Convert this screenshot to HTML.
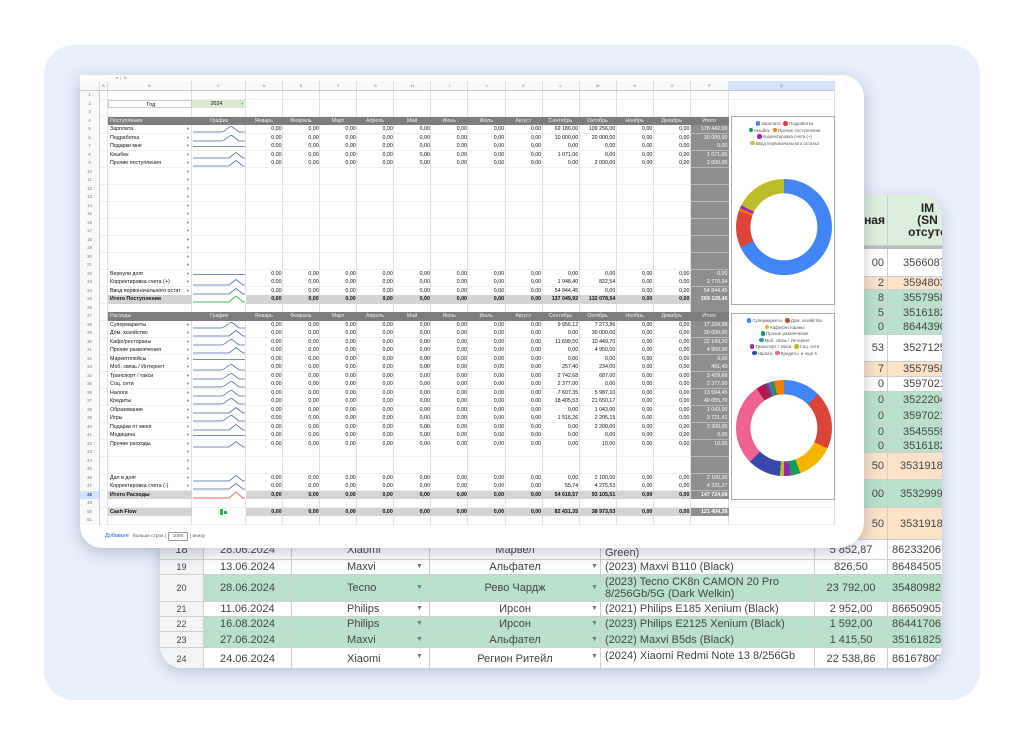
<!DOCTYPE html>
<html><head><meta charset="utf-8"><style>
*{margin:0;padding:0;box-sizing:border-box}
body{width:1024px;height:746px;background:#fff;position:relative;overflow:hidden;font-family:"Liberation Sans",sans-serif}
.bg{position:absolute;left:44px;top:45px;width:936px;height:655px;background:#e8eefb;border-radius:30px}
.back{position:absolute;left:160px;top:195px;width:782px;height:473px;background:#fff;border-radius:22px;overflow:hidden;box-shadow:0 4px 14px rgba(60,70,110,.25);font-size:11px;color:#444}
.back .c{position:absolute;display:flex;align-items:center;justify-content:center;border-right:1px solid #cfcfcf;border-bottom:1px solid #cfcfcf;white-space:nowrap;overflow:hidden;line-height:12px}
.back .l{justify-content:flex-start;padding-left:4px;white-space:normal}
.gr{background:#b8e2cc}.or{background:#fce3c8}.hd2{background:#dceedc;font-weight:bold;font-size:12px;line-height:14px;text-align:center;color:#222}
.arr{position:absolute;font-size:7px;color:#777}
.front{position:absolute;left:80px;top:75px;width:784px;height:473px;background:#fff;border-radius:0 22px 26px 22px;overflow:hidden;box-shadow:0 4px 16px rgba(60,70,110,.3)}
.fb{position:absolute;left:0;top:0;width:784px;height:6px;font-size:4px;color:#888;padding-left:36px;line-height:6px}
.sheet{position:absolute;left:0;top:6px;width:755px}
.g{display:grid;grid-template-columns:20px 8px 84px 54px repeat(12,37.08px) 38px 106px}
.hd{height:10px;background:#f8f9fa;border-bottom:1px solid #ccc;font-size:4px;color:#777;line-height:9px;text-align:center}
.hd>i{border-right:.5px solid #ddd;font-style:normal}
.vl{position:absolute;left:0;top:10px;width:755px;height:434px}
.vl>i{border-right:.5px solid #e0e0e0;height:100%}
.pg{position:absolute;left:611px;top:35.5px;width:38px;height:382.5px;background:#8e8e8e}
.rows{position:relative}
.r{height:8.5px;font-size:5.3px;line-height:8.5px;color:#111;background:linear-gradient(#e2e2e2,#e2e2e2) bottom/100% .5px no-repeat}
.r>i{font-style:normal;white-space:nowrap;overflow:hidden;height:8.5px;position:relative}
.r>i:first-child{background:#f8f9fa;color:#777;text-align:center;font-size:4.2px;border-right:.5px solid #ccc}
.r>i:nth-child(3){padding-left:2px}
.r>i:nth-child(n+5){text-align:right;padding-right:1.5px}
.r>i:nth-child(17){color:#fff}
.dd>i:nth-child(3)::after{content:"▾";position:absolute;right:3px;top:0;color:#777;font-size:4.5px}
.h>i:nth-child(n+3):nth-child(-n+17){background:#7d7d7d;color:#f2f2f2}
.h>i:nth-child(4),.h>i:nth-child(n+5){text-align:center!important}
.s>i:nth-child(n+3):nth-child(-n+17){background:#d4d4d4;font-weight:bold}
.s>i:nth-child(17){background:#8e8e8e!important;color:#fff}
.r svg{position:absolute;left:1px;top:0}
.chart{position:absolute;left:651px;width:104px;background:#fff;border:.7px solid #aaa}
.leg{font-size:4.4px;color:#555;text-align:center;line-height:6.5px;padding-top:4px}
.d{display:inline-block;width:4.5px;height:4.5px;border-radius:50%;vertical-align:-0.5px;margin:0 1px 0 3px}
.donut{position:absolute;border-radius:50%}
.donut::after{content:"";position:absolute;left:50%;top:50%;width:70%;height:70%;transform:translate(-50%,-50%);background:#fff;border-radius:50%}
.bot{position:absolute;left:25px;top:457px;font-size:4.8px;color:#555}
</style></head><body>
<div class="bg"></div>
<svg width="0" height="0" style="position:absolute"><defs>
<symbol id="p" viewBox="0 0 52 8"><path d="M0 7H36L43 1.5L50 7H52" fill="none" stroke="#4a6aa3" stroke-width=".8"/></symbol>
<symbol id="q" viewBox="0 0 52 8"><path d="M0 7H28C33 7 34 1.5 39 1.5L46 7H52" fill="none" stroke="#4a6aa3" stroke-width=".8"/></symbol>
<symbol id="f" viewBox="0 0 52 8"><path d="M0 4.5H52" fill="none" stroke="#4a6aa3" stroke-width=".8"/></symbol>
</defs></svg>

<div class="back">
<div class="c hd2" style="left:690px;top:0;width:38px;height:51px;justify-content:flex-end;padding-right:2px">ная</div>
<div class="c hd2" style="left:728px;top:0;width:80px;height:51px">IM<br>(SN<br>отсутс</div>
<div class="c" style="left:690px;top:51px;width:38px;height:3px;background:#bbb;border:0"></div>
<div class="c" style="left:728px;top:51px;width:80px;height:3px;background:#bbb;border:0"></div>
<div class="c" style="left:690px;top:54px;width:38px;height:28px;justify-content:flex-end;padding-right:3px">00</div><div class="c" style="left:728px;top:54px;width:80px;height:28px">35660875</div>
<div class="c or" style="left:690px;top:82px;width:38px;height:13px;justify-content:flex-end;padding-right:3px">2</div><div class="c or" style="left:728px;top:82px;width:80px;height:13px">35948030</div>
<div class="c gr" style="left:690px;top:95px;width:38px;height:16px;justify-content:flex-end;padding-right:3px">8</div><div class="c gr" style="left:728px;top:95px;width:80px;height:16px">35579588</div>
<div class="c gr" style="left:690px;top:111px;width:38px;height:14px;justify-content:flex-end;padding-right:3px">5</div><div class="c gr" style="left:728px;top:111px;width:80px;height:14px">35161825</div>
<div class="c gr" style="left:690px;top:125px;width:38px;height:15px;justify-content:flex-end;padding-right:3px">0</div><div class="c gr" style="left:728px;top:125px;width:80px;height:15px">86443906</div>
<div class="c" style="left:690px;top:140px;width:38px;height:27px;justify-content:flex-end;padding-right:3px">53</div><div class="c" style="left:728px;top:140px;width:80px;height:27px">35271257</div>
<div class="c or" style="left:690px;top:167px;width:38px;height:15px;justify-content:flex-end;padding-right:3px">7</div><div class="c or" style="left:728px;top:167px;width:80px;height:15px">35579588</div>
<div class="c" style="left:690px;top:182px;width:38px;height:15px;justify-content:flex-end;padding-right:3px">0</div><div class="c" style="left:728px;top:182px;width:80px;height:15px">35970210</div>
<div class="c gr" style="left:690px;top:197px;width:38px;height:16px;justify-content:flex-end;padding-right:3px">0</div><div class="c gr" style="left:728px;top:197px;width:80px;height:16px">35222048</div>
<div class="c gr" style="left:690px;top:213px;width:38px;height:17px;justify-content:flex-end;padding-right:3px">0</div><div class="c gr" style="left:728px;top:213px;width:80px;height:17px">35970210</div>
<div class="c gr" style="left:690px;top:230px;width:38px;height:14px;justify-content:flex-end;padding-right:3px">0</div><div class="c gr" style="left:728px;top:230px;width:80px;height:14px">35455590</div>
<div class="c gr" style="left:690px;top:244px;width:38px;height:14px;justify-content:flex-end;padding-right:3px">0</div><div class="c gr" style="left:728px;top:244px;width:80px;height:14px">35161825</div>
<div class="c or" style="left:690px;top:258px;width:38px;height:27px;justify-content:flex-end;padding-right:3px">50</div><div class="c or" style="left:728px;top:258px;width:80px;height:27px">353191812</div>
<div class="c gr" style="left:690px;top:285px;width:38px;height:28px;justify-content:flex-end;padding-right:3px">00</div><div class="c gr" style="left:728px;top:285px;width:80px;height:28px">353299948</div>
<div class="c or" style="left:690px;top:313px;width:38px;height:32px;justify-content:flex-end;padding-right:3px">50</div><div class="c or" style="left:728px;top:313px;width:80px;height:32px">353191812</div>
<div class="c" style="left:0;top:345px;width:44px;height:120px;background:#f3f4f6;border-right:2px solid #bbb"></div>
<div class="c" style="left:0;top:345px;width:44px;height:20px;background:#f3f4f6">18</div>
<div class="c" style="left:44px;top:345px;width:88px;height:20px">28.06.2024</div>
<div class="c" style="left:132px;top:345px;width:138px;height:20px;justify-content:flex-start;padding-left:55px">Xiaomi</div>
<div class="c" style="left:270px;top:345px;width:171px;height:20px">Марвел</div>
<div class="c l" style="left:441px;top:345px;width:214px;height:20px;align-items:flex-end">Green)</div>
<div class="c" style="left:655px;top:345px;width:73px;height:20px">5 852,87</div>
<div class="c" style="left:728px;top:345px;width:80px;height:20px;justify-content:flex-start;padding-left:4px">86233206</div>

<div class="c" style="left:0;top:365px;width:44px;height:15px;background:#f3f4f6;font-size:9px">19</div>
<div class="c" style="left:44px;top:365px;width:88px;height:15px">13.06.2024</div>
<div class="c" style="left:132px;top:365px;width:138px;height:15px;justify-content:flex-start;padding-left:55px">Maxvi</div>
<div class="c" style="left:270px;top:365px;width:171px;height:15px">Альфател</div>
<div class="c l" style="left:441px;top:365px;width:214px;height:15px">(2023) Maxvi B110 (Black)</div>
<div class="c" style="left:655px;top:365px;width:73px;height:15px">826,50</div>
<div class="c" style="left:728px;top:365px;width:80px;height:15px;justify-content:flex-start;padding-left:4px">86484505</div>

<div class="c" style="left:0;top:380px;width:44px;height:27px;background:#f3f4f6;font-size:9px">20</div>
<div class="c gr" style="left:44px;top:380px;width:88px;height:27px">28.06.2024</div>
<div class="c gr" style="left:132px;top:380px;width:138px;height:27px;justify-content:flex-start;padding-left:55px">Tecno</div>
<div class="c gr" style="left:270px;top:380px;width:171px;height:27px">Рево Чардж</div>
<div class="c gr l" style="left:441px;top:380px;width:214px;height:27px">(2023) Tecno CK8n CAMON 20 Pro 8/256Gb/5G (Dark Welkin)</div>
<div class="c gr" style="left:655px;top:380px;width:73px;height:27px">23 792,00</div>
<div class="c gr" style="left:728px;top:380px;width:80px;height:27px;justify-content:flex-start;padding-left:4px">35480982</div>

<div class="c" style="left:0;top:407px;width:44px;height:15px;background:#f3f4f6;font-size:9px">21</div>
<div class="c" style="left:44px;top:407px;width:88px;height:15px">11.06.2024</div>
<div class="c" style="left:132px;top:407px;width:138px;height:15px;justify-content:flex-start;padding-left:55px">Philips</div>
<div class="c" style="left:270px;top:407px;width:171px;height:15px">Ирсон</div>
<div class="c l" style="left:441px;top:407px;width:214px;height:15px">(2021) Philips E185 Xenium (Black)</div>
<div class="c" style="left:655px;top:407px;width:73px;height:15px">2 952,00</div>
<div class="c" style="left:728px;top:407px;width:80px;height:15px;justify-content:flex-start;padding-left:4px">86650905</div>

<div class="c" style="left:0;top:422px;width:44px;height:15px;background:#f3f4f6;font-size:9px">22</div>
<div class="c gr" style="left:44px;top:422px;width:88px;height:15px">16.08.2024</div>
<div class="c gr" style="left:132px;top:422px;width:138px;height:15px;justify-content:flex-start;padding-left:55px">Philips</div>
<div class="c gr" style="left:270px;top:422px;width:171px;height:15px">Ирсон</div>
<div class="c gr l" style="left:441px;top:422px;width:214px;height:15px">(2023) Philips E2125 Xenium (Black)</div>
<div class="c gr" style="left:655px;top:422px;width:73px;height:15px">1 592,00</div>
<div class="c gr" style="left:728px;top:422px;width:80px;height:15px;justify-content:flex-start;padding-left:4px">86441706</div>

<div class="c" style="left:0;top:437px;width:44px;height:16px;background:#f3f4f6;font-size:9px">23</div>
<div class="c gr" style="left:44px;top:437px;width:88px;height:16px">27.06.2024</div>
<div class="c gr" style="left:132px;top:437px;width:138px;height:16px;justify-content:flex-start;padding-left:55px">Maxvi</div>
<div class="c gr" style="left:270px;top:437px;width:171px;height:16px">Альфател</div>
<div class="c gr l" style="left:441px;top:437px;width:214px;height:16px">(2022) Maxvi B5ds (Black)</div>
<div class="c gr" style="left:655px;top:437px;width:73px;height:16px">1 415,50</div>
<div class="c gr" style="left:728px;top:437px;width:80px;height:16px;justify-content:flex-start;padding-left:4px">35161825</div>

<div class="c" style="left:0;top:453px;width:44px;height:22px;background:#f3f4f6;font-size:9px">24</div>
<div class="c" style="left:44px;top:453px;width:88px;height:22px">24.06.2024</div>
<div class="c" style="left:132px;top:453px;width:138px;height:22px;justify-content:flex-start;padding-left:55px">Xiaomi</div>
<div class="c" style="left:270px;top:453px;width:171px;height:22px">Регион Ритейл</div>
<div class="c l" style="left:441px;top:453px;width:214px;height:22px;align-items:flex-start;padding-top:2px">(2024) Xiaomi Redmi Note 13 8/256Gb</div>
<div class="c" style="left:655px;top:453px;width:73px;height:22px">22 538,86</div>
<div class="c" style="left:728px;top:453px;width:80px;height:22px;justify-content:flex-start;padding-left:4px">86167800</div>
<span class="arr" style="left:256px;top:368px">▼</span><span class="arr" style="left:256px;top:389px">▼</span><span class="arr" style="left:256px;top:410px">▼</span><span class="arr" style="left:256px;top:425px">▼</span><span class="arr" style="left:256px;top:441px">▼</span><span class="arr" style="left:256px;top:458px">▼</span>
<span class="arr" style="left:431px;top:368px">▼</span><span class="arr" style="left:431px;top:389px">▼</span><span class="arr" style="left:431px;top:410px">▼</span><span class="arr" style="left:431px;top:425px">▼</span><span class="arr" style="left:431px;top:441px">▼</span><span class="arr" style="left:431px;top:458px">▼</span>
</div>

<div class="front">
<div class="fb">▾ &nbsp;| &nbsp;fx</div>
<div class="sheet">
<div class="g hd"><i></i><i>A</i><i>B</i><i>C</i><i>D</i><i>E</i><i>F</i><i>G</i><i>H</i><i>I</i><i>J</i><i>K</i><i>L</i><i>M</i><i>N</i><i>O</i><i>P</i><i style="background:#d3e3fd">Q</i></div>
<div class="g vl"><i></i><i></i><i></i><i></i><i></i><i></i><i></i><i></i><i></i><i></i><i></i><i></i><i></i><i></i><i></i><i></i><i></i><i></i></div>
<div class="pg"></div>
<div class="rows">
<div class="g r"><i>1</i></div>
<div class="g r"><i>2</i><i></i><i style="background:#fff;border:.5px solid #ccc;text-align:center">Год</i><i style="background:#d9ead3;text-align:center">2024 <span style="color:#6a6;font-size:4px;float:right;padding-right:3px">▾</span></i></div>
<div class="g r"><i>3</i></div>
<div class="g r h"><i>4</i><i></i><i>Поступления</i><i style="text-align:center">График</i><i>Январь</i><i>Февраль</i><i>Март</i><i>Апрель</i><i>Май</i><i>Июнь</i><i>Июль</i><i>Август</i><i>Сентябрь</i><i>Октябрь</i><i>Ноябрь</i><i>Декабрь</i><i>Итого</i></div>
<div class="g r dd"><i>5</i><i></i><i>Зарплата</i><i><svg width="52" height="8"><use href="#q"/></svg></i><i>0,00</i><i>0,00</i><i>0,00</i><i>0,00</i><i>0,00</i><i>0,00</i><i>0,00</i><i>0,00</i><i>69 186,00</i><i>109 256,00</i><i>0,00</i><i>0,00</i><i>178 442,00</i></div>
<div class="g r dd"><i>6</i><i></i><i>Подработка</i><i><svg width="52" height="8"><use href="#q"/></svg></i><i>0,00</i><i>0,00</i><i>0,00</i><i>0,00</i><i>0,00</i><i>0,00</i><i>0,00</i><i>0,00</i><i>10 000,00</i><i>20 000,00</i><i>0,00</i><i>0,00</i><i>30 000,00</i></div>
<div class="g r dd"><i>7</i><i></i><i>Подарки мне</i><i><svg width="52" height="8"><use href="#f"/></svg></i><i>0,00</i><i>0,00</i><i>0,00</i><i>0,00</i><i>0,00</i><i>0,00</i><i>0,00</i><i>0,00</i><i>0,00</i><i>0,00</i><i>0,00</i><i>0,00</i><i>0,00</i></div>
<div class="g r dd"><i>8</i><i></i><i>Кешбек</i><i><svg width="52" height="8"><use href="#p"/></svg></i><i>0,00</i><i>0,00</i><i>0,00</i><i>0,00</i><i>0,00</i><i>0,00</i><i>0,00</i><i>0,00</i><i>1 071,06</i><i>0,00</i><i>0,00</i><i>0,00</i><i>1 071,06</i></div>
<div class="g r dd"><i>9</i><i></i><i>Прочие поступления</i><i><svg width="52" height="8"><use href="#p"/></svg></i><i>0,00</i><i>0,00</i><i>0,00</i><i>0,00</i><i>0,00</i><i>0,00</i><i>0,00</i><i>0,00</i><i>0,00</i><i>2 000,00</i><i>0,00</i><i>0,00</i><i>2 000,00</i></div>
<div class="g r dd"><i>10</i><i></i><i></i></div>
<div class="g r dd"><i>11</i><i></i><i></i></div>
<div class="g r dd"><i>12</i><i></i><i></i></div>
<div class="g r dd"><i>13</i><i></i><i></i></div>
<div class="g r dd"><i>14</i><i></i><i></i></div>
<div class="g r dd"><i>15</i><i></i><i></i></div>
<div class="g r dd"><i>16</i><i></i><i></i></div>
<div class="g r dd"><i>17</i><i></i><i></i></div>
<div class="g r dd"><i>18</i><i></i><i></i></div>
<div class="g r dd"><i>19</i><i></i><i></i></div>
<div class="g r dd"><i>20</i><i></i><i></i></div>
<div class="g r dd"><i>21</i><i></i><i></i></div>
<div class="g r dd"><i>22</i><i></i><i>Вернули долг</i><i><svg width="52" height="8"><use href="#f"/></svg></i><i>0,00</i><i>0,00</i><i>0,00</i><i>0,00</i><i>0,00</i><i>0,00</i><i>0,00</i><i>0,00</i><i>0,00</i><i>0,00</i><i>0,00</i><i>0,00</i><i>0,00</i></div>
<div class="g r dd"><i>23</i><i></i><i>Корректировка счета (+)</i><i><svg width="52" height="8"><use href="#p"/></svg></i><i>0,00</i><i>0,00</i><i>0,00</i><i>0,00</i><i>0,00</i><i>0,00</i><i>0,00</i><i>0,00</i><i>1 948,40</i><i>822,54</i><i>0,00</i><i>0,00</i><i>2 770,94</i></div>
<div class="g r dd"><i>24</i><i></i><i>Ввод первоначального остат</i><i><svg width="52" height="8"><use href="#p"/></svg></i><i>0,00</i><i>0,00</i><i>0,00</i><i>0,00</i><i>0,00</i><i>0,00</i><i>0,00</i><i>0,00</i><i>54 844,45</i><i>0,00</i><i>0,00</i><i>0,00</i><i>54 844,45</i></div>
<div class="g r s"><i>25</i><i></i><i>Итого Поступления</i><i style="background:#fff!important"><svg width="52" height="8"><path d="M0 7H36L43 1L50 7H52" fill="none" stroke="#4caf50" stroke-width=".9"/></svg></i><i>0,00</i><i>0,00</i><i>0,00</i><i>0,00</i><i>0,00</i><i>0,00</i><i>0,00</i><i>0,00</i><i>137 049,92</i><i>132 078,54</i><i>0,00</i><i>0,00</i><i>269 128,46</i></div>
<div class="g r"><i>26</i></div>
<div class="g r h"><i>27</i><i></i><i>Расходы</i><i style="text-align:center">График</i><i>Январь</i><i>Февраль</i><i>Март</i><i>Апрель</i><i>Май</i><i>Июнь</i><i>Июль</i><i>Август</i><i>Сентябрь</i><i>Октябрь</i><i>Ноябрь</i><i>Декабрь</i><i>Итого</i></div>
<div class="g r dd"><i>28</i><i></i><i>Супермаркеты</i><i><svg width="52" height="8"><use href="#q"/></svg></i><i>0,00</i><i>0,00</i><i>0,00</i><i>0,00</i><i>0,00</i><i>0,00</i><i>0,00</i><i>0,00</i><i>9 956,12</i><i>7 273,86</i><i>0,00</i><i>0,00</i><i>17 229,98</i></div>
<div class="g r dd"><i>29</i><i></i><i>Дом. хозяйство</i><i><svg width="52" height="8"><use href="#p"/></svg></i><i>0,00</i><i>0,00</i><i>0,00</i><i>0,00</i><i>0,00</i><i>0,00</i><i>0,00</i><i>0,00</i><i>0,00</i><i>30 000,00</i><i>0,00</i><i>0,00</i><i>30 000,00</i></div>
<div class="g r dd"><i>30</i><i></i><i>Кафе/рестораны</i><i><svg width="52" height="8"><use href="#q"/></svg></i><i>0,00</i><i>0,00</i><i>0,00</i><i>0,00</i><i>0,00</i><i>0,00</i><i>0,00</i><i>0,00</i><i>11 699,50</i><i>10 449,70</i><i>0,00</i><i>0,00</i><i>22 149,20</i></div>
<div class="g r dd"><i>31</i><i></i><i>Прочие развлечения</i><i><svg width="52" height="8"><use href="#p"/></svg></i><i>0,00</i><i>0,00</i><i>0,00</i><i>0,00</i><i>0,00</i><i>0,00</i><i>0,00</i><i>0,00</i><i>0,00</i><i>4 950,00</i><i>0,00</i><i>0,00</i><i>4 950,00</i></div>
<div class="g r dd"><i>32</i><i></i><i>Маркетплейсы</i><i><svg width="52" height="8"><use href="#f"/></svg></i><i>0,00</i><i>0,00</i><i>0,00</i><i>0,00</i><i>0,00</i><i>0,00</i><i>0,00</i><i>0,00</i><i>0,00</i><i>0,00</i><i>0,00</i><i>0,00</i><i>0,00</i></div>
<div class="g r dd"><i>33</i><i></i><i>Моб. связь / Интернет</i><i><svg width="52" height="8"><use href="#q"/></svg></i><i>0,00</i><i>0,00</i><i>0,00</i><i>0,00</i><i>0,00</i><i>0,00</i><i>0,00</i><i>0,00</i><i>257,40</i><i>234,00</i><i>0,00</i><i>0,00</i><i>491,40</i></div>
<div class="g r dd"><i>34</i><i></i><i>Транспорт / такси</i><i><svg width="52" height="8"><use href="#q"/></svg></i><i>0,00</i><i>0,00</i><i>0,00</i><i>0,00</i><i>0,00</i><i>0,00</i><i>0,00</i><i>0,00</i><i>2 742,68</i><i>687,00</i><i>0,00</i><i>0,00</i><i>3 429,68</i></div>
<div class="g r dd"><i>35</i><i></i><i>Соц. сети</i><i><svg width="52" height="8"><use href="#q"/></svg></i><i>0,00</i><i>0,00</i><i>0,00</i><i>0,00</i><i>0,00</i><i>0,00</i><i>0,00</i><i>0,00</i><i>2 377,00</i><i>0,00</i><i>0,00</i><i>0,00</i><i>2 377,00</i></div>
<div class="g r dd"><i>36</i><i></i><i>Налоги</i><i><svg width="52" height="8"><use href="#q"/></svg></i><i>0,00</i><i>0,00</i><i>0,00</i><i>0,00</i><i>0,00</i><i>0,00</i><i>0,00</i><i>0,00</i><i>7 607,35</i><i>5 987,10</i><i>0,00</i><i>0,00</i><i>13 594,45</i></div>
<div class="g r dd"><i>37</i><i></i><i>Кредиты</i><i><svg width="52" height="8"><use href="#q"/></svg></i><i>0,00</i><i>0,00</i><i>0,00</i><i>0,00</i><i>0,00</i><i>0,00</i><i>0,00</i><i>0,00</i><i>18 405,53</i><i>21 650,17</i><i>0,00</i><i>0,00</i><i>40 055,70</i></div>
<div class="g r dd"><i>38</i><i></i><i>Образование</i><i><svg width="52" height="8"><use href="#p"/></svg></i><i>0,00</i><i>0,00</i><i>0,00</i><i>0,00</i><i>0,00</i><i>0,00</i><i>0,00</i><i>0,00</i><i>0,00</i><i>1 043,00</i><i>0,00</i><i>0,00</i><i>1 043,00</i></div>
<div class="g r dd"><i>39</i><i></i><i>Игры</i><i><svg width="52" height="8"><use href="#q"/></svg></i><i>0,00</i><i>0,00</i><i>0,00</i><i>0,00</i><i>0,00</i><i>0,00</i><i>0,00</i><i>0,00</i><i>1 516,26</i><i>2 205,15</i><i>0,00</i><i>0,00</i><i>3 721,41</i></div>
<div class="g r dd"><i>40</i><i></i><i>Подарки от меня</i><i><svg width="52" height="8"><use href="#p"/></svg></i><i>0,00</i><i>0,00</i><i>0,00</i><i>0,00</i><i>0,00</i><i>0,00</i><i>0,00</i><i>0,00</i><i>0,00</i><i>2 200,00</i><i>0,00</i><i>0,00</i><i>2 200,00</i></div>
<div class="g r dd"><i>41</i><i></i><i>Медицина</i><i><svg width="52" height="8"><use href="#f"/></svg></i><i>0,00</i><i>0,00</i><i>0,00</i><i>0,00</i><i>0,00</i><i>0,00</i><i>0,00</i><i>0,00</i><i>0,00</i><i>0,00</i><i>0,00</i><i>0,00</i><i>0,00</i></div>
<div class="g r dd"><i>42</i><i></i><i>Прочие расходы</i><i><svg width="52" height="8"><use href="#p"/></svg></i><i>0,00</i><i>0,00</i><i>0,00</i><i>0,00</i><i>0,00</i><i>0,00</i><i>0,00</i><i>0,00</i><i>0,00</i><i>10,00</i><i>0,00</i><i>0,00</i><i>10,00</i></div>
<div class="g r dd"><i>43</i><i></i><i></i></div>
<div class="g r dd"><i>44</i><i></i><i></i></div>
<div class="g r dd"><i>45</i><i></i><i></i></div>
<div class="g r dd"><i>46</i><i></i><i>Дал в долг</i><i><svg width="52" height="8"><use href="#p"/></svg></i><i>0,00</i><i>0,00</i><i>0,00</i><i>0,00</i><i>0,00</i><i>0,00</i><i>0,00</i><i>0,00</i><i>0,00</i><i>2 100,00</i><i>0,00</i><i>0,00</i><i>2 100,00</i></div>
<div class="g r dd"><i>47</i><i></i><i>Корректировка счета (-)</i><i><svg width="52" height="8"><use href="#p"/></svg></i><i>0,00</i><i>0,00</i><i>0,00</i><i>0,00</i><i>0,00</i><i>0,00</i><i>0,00</i><i>0,00</i><i>55,74</i><i>4 275,53</i><i>0,00</i><i>0,00</i><i>4 331,27</i></div>
<div class="g r s"><i style="background:#d3e3fd;color:#1a56c4;font-weight:bold">48</i><i></i><i>Итого Расходы</i><i style="background:#fff!important"><svg width="52" height="8"><path d="M0 7H36L43 1L50 7H52" fill="none" stroke="#e06666" stroke-width=".9"/></svg></i><i>0,00</i><i>0,00</i><i>0,00</i><i>0,00</i><i>0,00</i><i>0,00</i><i>0,00</i><i>0,00</i><i>54 618,57</i><i>93 105,51</i><i>0,00</i><i>0,00</i><i>147 724,08</i></div>
<div class="g r"><i>49</i></div>
<div class="g r s"><i>50</i><i></i><i>Cash Flow</i><i style="background:#fff!important"><span style="position:absolute;left:28px;top:1px;width:3px;height:6px;background:#1db954"></span><span style="position:absolute;left:32px;top:3.5px;width:3px;height:3px;background:#1db954"></span></i><i>0,00</i><i>0,00</i><i>0,00</i><i>0,00</i><i>0,00</i><i>0,00</i><i>0,00</i><i>0,00</i><i>82 431,35</i><i>38 973,03</i><i>0,00</i><i>0,00</i><i>121 404,38</i></div>
<div class="g r"><i>51</i></div>
</div>
</div>
<div class="chart" style="top:41px;height:189px">
<div class="leg"><span class="d" style="background:#4285f4"></span>Зарплата<span class="d" style="background:#db4437"></span>Подработка<br><span class="d" style="background:#0f9d58"></span>Кешбек<span class="d" style="background:#f57c00"></span>Прочие поступления<br><span class="d" style="background:#9c27b0"></span>Корректировка счета (+)<br><span class="d" style="background:#c0ca33"></span>Ввод первоначального остатка</div>
<div class="donut" style="left:4px;top:62px;width:96px;height:96px;background:conic-gradient(#4285f4 0 245deg,#db4437 245deg 290deg,#f57c00 290deg 293deg,#9c27b0 293deg 297deg,#bdbd2a 297deg 360deg)"></div>
</div>
<div class="chart" style="top:238px;height:187px">
<div class="leg"><span class="d" style="background:#4285f4"></span>Супермаркеты<span class="d" style="background:#db4437"></span>Дом. хозяйство<br><span class="d" style="background:#f4b400"></span>Кафе/рестораны<br><span class="d" style="background:#0f9d58"></span>Прочие развлечения<br><span class="d" style="background:#26a69a"></span>Моб. связь / Интернет<br><span class="d" style="background:#9c27b0"></span>Транспорт / такси<span class="d" style="background:#bdbd2a"></span>Соц. сети<br><span class="d" style="background:#3949ab"></span>Налоги<span class="d" style="background:#f06292"></span>Кредиты &nbsp;и ещё 6</div>
<div class="donut" style="left:4px;top:66px;width:96px;height:96px;background:conic-gradient(#4285f4 0 45deg,#db4437 45deg 115deg,#f4b400 115deg 160deg,#0f9d58 160deg 172deg,#9c27b0 172deg 180deg,#bdbd2a 180deg 185deg,#3949ab 185deg 225deg,#f06292 225deg 325deg,#b0174f 325deg 337deg,#455a64 337deg 340deg,#7e57c2 340deg 344deg,#0f9d58 344deg 348deg,#f57c00 348deg 360deg)"></div>
</div>
<div class="bot"><span style="color:#1a56c4;font-size:5.5px">Добавьте</span> &nbsp; больше строк ( <span style="display:inline-block;border:.6px solid #999;border-radius:2px;padding:1px 4px">1000</span> ) внизу</div>
</div>
</body></html>
